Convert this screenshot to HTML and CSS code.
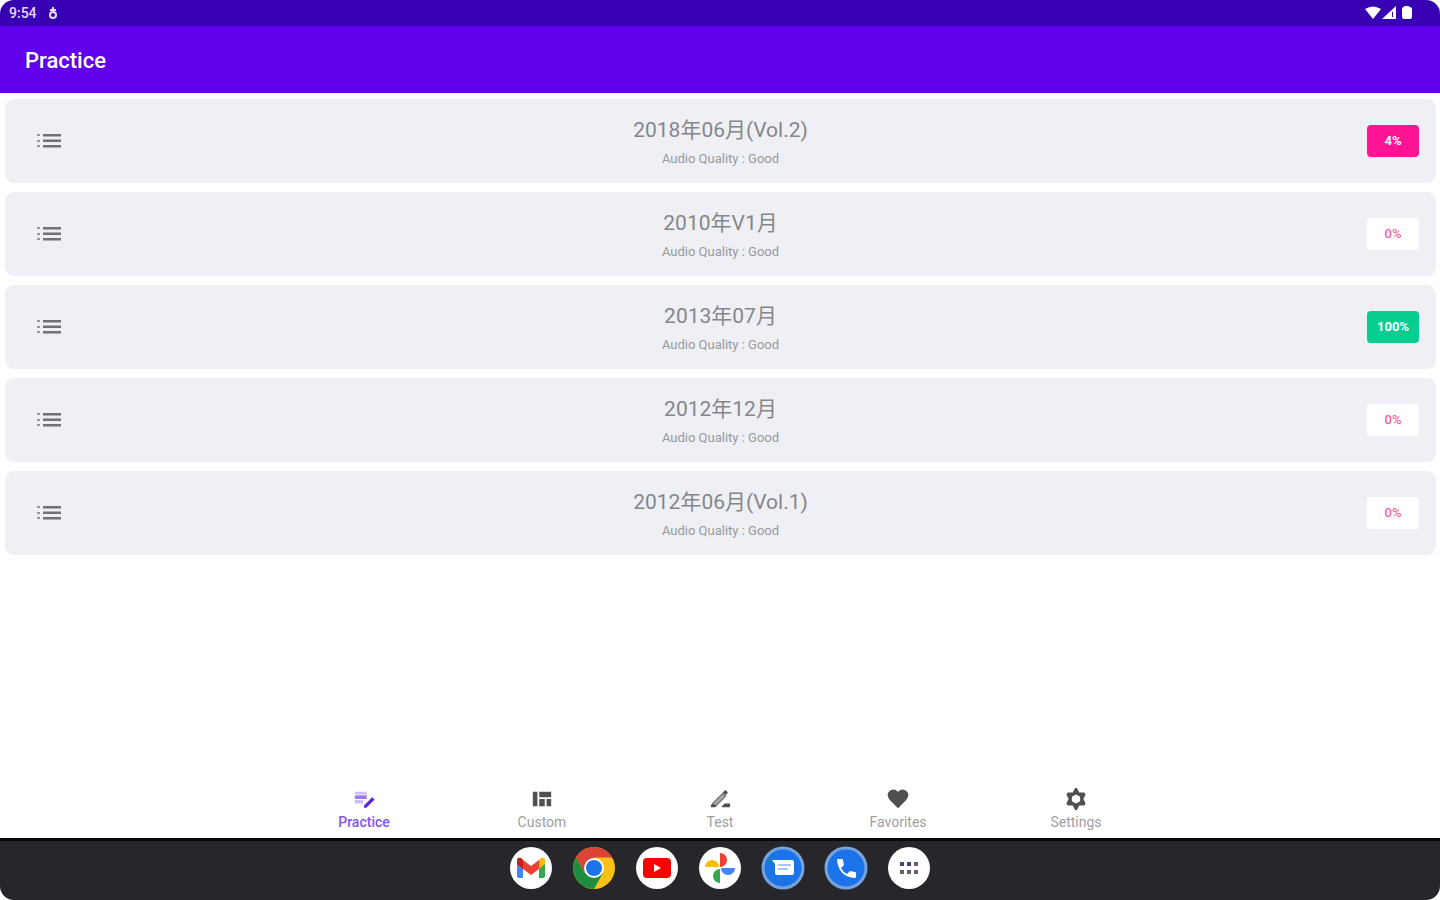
FILE: index.html
```
<!DOCTYPE html>
<html lang="en">
<head>
    <meta charset="UTF-8">
    <meta name="viewport" content="width=device-width, initial-scale=1.0">
    <title>Practice</title>
    <link rel="stylesheet" href="styles.css">
</head>
<body>
    <!-- shared list icon -->
    <svg class="defs" aria-hidden="true">
        <symbol id="icon-list" viewBox="0 0 24 16">
            <path d="M0 1h3v2H0zM0 7h3v2H0zM0 12h3v2H0z" opacity=".7"/>
            <path d="M6 1h18v2.500H6zM6 6.500h18V9H6zM6 12h18v2.500H6z"/>
        </symbol>
    </svg>

    <div class="screen">
        <div class="status-bar">
            <div class="status-left">
                <span>9:54</span>
                <svg width="10" height="14" viewBox="0 0 10 14" fill="none" stroke="#e6dcfa" stroke-width="2">
                    <path d="M5 1v5M2 4h6"/>
                    <circle cx="5" cy="9" r="3"/>
                </svg>
            </div>
            <svg width="48" height="16" viewBox="0 0 48 16" fill="#fff">
                <path d="M0 4Q8-1 16 4L8 14z"/>
                <path d="M31 1v13H17z"/>
                <path d="M27 7h1v5h-1z" fill="#3700b3"/>
                <path d="M39 1h5v1h1q2 0 2 2v8q0 2-2 2h-6q-2 0-2-2V4q0-2 2-2z"/>
            </svg>
        </div>

        <header class="app-bar">
            <h1>Practice</h1>
        </header>

        <main class="list">
            <div class="card">
                <button class="menu" aria-label="Show list"><svg><use href="#icon-list"/></svg></button>
                <div class="info">
                    <h2>2018年06月(Vol.2)</h2>
                    <p>Audio Quality : Good</p>
                </div>
                <span class="badge low">4%</span>
            </div>
            <div class="card">
                <button class="menu" aria-label="Show list"><svg><use href="#icon-list"/></svg></button>
                <div class="info">
                    <h2>2010年V1月</h2>
                    <p>Audio Quality : Good</p>
                </div>
                <span class="badge">0%</span>
            </div>
            <div class="card">
                <button class="menu" aria-label="Show list"><svg><use href="#icon-list"/></svg></button>
                <div class="info">
                    <h2>2013年07月</h2>
                    <p>Audio Quality : Good</p>
                </div>
                <span class="badge done">100%</span>
            </div>
            <div class="card">
                <button class="menu" aria-label="Show list"><svg><use href="#icon-list"/></svg></button>
                <div class="info">
                    <h2>2012年12月</h2>
                    <p>Audio Quality : Good</p>
                </div>
                <span class="badge">0%</span>
            </div>
            <div class="card">
                <button class="menu" aria-label="Show list"><svg><use href="#icon-list"/></svg></button>
                <div class="info">
                    <h2>2012年06月(Vol.1)</h2>
                    <p>Audio Quality : Good</p>
                </div>
                <span class="badge">0%</span>
            </div>
        </main>

        <nav class="tabs">
            <a href="#practice" class="active">
                <svg viewBox="0 0 24 24">
                    <path d="M2 4h13v3H2zM2 13h9v4H2z" opacity=".3"/>
                    <path d="M2 8h13v4H2z" opacity=".6"/>
                    <path d="M12 19l9-9 2.500 2.500-9 9H12z"/>
                </svg>
                Practice
            </a>
            <a href="#custom">
                <svg viewBox="0 0 24 24">
                    <path d="M2 4h5v16H2zM9 4h13v6H9zM9 12h6v8H9zM17 12h5v8h-5z"/>
                </svg>
                Custom
            </a>
            <a href="#test">
                <svg viewBox="0 0 24 24">
                    <path d="M4 17L15 6l3 3L7 20H4z" fill="#aaa" stroke="#777" stroke-width="1.500"/>
                    <path d="M15 5l2-2q1-1 2 0l1 1q1 1 0 2l-2 2zM14 20l3-3h6v4h-9zM2 18h5v3H2z"/>
                </svg>
                Test
            </a>
            <a href="#favorites">
                <svg viewBox="0 0 24 24">
                    <path d="M12 22L3 13Q-1 8 2 4 7-1 12 4 17-1 22 4 25 8 21 13z"/>
                </svg>
                Favorites
            </a>
            <a href="#settings">
                <svg viewBox="0 0 24 24">
                    <path fill-rule="evenodd" d="M11 0h2l2.500 5H21l1.500 2-2.500 5 2.500 5-1.500 2h-5.500L13 24h-2l-2.500-5H3l-1.500-2L4 12 1.500 7 3 5h5.500zM12 7l-4.500 2.500v5L12 17l4.500-2.500v-5z"/>
                </svg>
                Settings
            </a>
        </nav>

        <footer class="dock">
            <button aria-label="Gmail">
                <svg viewBox="0 0 44 44">
                    <circle cx="22" cy="22" r="21" fill="#fff"/>
                    <path d="M8 16l6 4v12h-4q-2 0-2-2z" fill="#4285f4"/>
                    <path d="M36 16l-6 4v12h4q2 0 2-2z" fill="#34a853"/>
                    <path d="M8 18v-3q0-4 4-3l2 2 8 6 8-6v9l-8 6-8-6z" fill="#ea4335"/>
                    <path d="M8 18v-3q0-4 4-3l2 2v9z" fill="#c5221f"/>
                    <path d="M30 14l2-2q4-1 4 3v3l-6 5z" fill="#fbbc04"/>
                </svg>
            </button>
            <button aria-label="Chrome">
                <svg viewBox="0 0 44 44">
                    <circle cx="22" cy="22" r="21" fill="#fbc116"/>
                    <path d="M3.800 11.500A21 21 0 0 1 40.200 11.500H22L13 27z" fill="#db4437"/>
                    <path d="M3.800 11.500A21 21 0 0 0 22 43l9-16H13z" fill="#1e8e3e"/>
                    <circle cx="22" cy="22" r="10" fill="#fff"/>
                    <circle cx="22" cy="22" r="8" fill="#1a73e8"/>
                </svg>
            </button>
            <button aria-label="YouTube">
                <svg viewBox="0 0 44 44">
                    <circle cx="22" cy="22" r="21" fill="#fff"/>
                    <rect x="8" y="12" width="28" height="20" rx="4" fill="#f00"/>
                    <path d="M19 18v8l7-4z" fill="#fff"/>
                </svg>
            </button>
            <button aria-label="Photos">
                <svg viewBox="0 0 44 44">
                    <circle cx="22" cy="22" r="21" fill="#fff"/>
                    <path d="M22 7a7 7 0 0 1 0 14z" fill="#ea4335"/>
                    <path d="M37 22a7 7 0 0 1-14 0z" fill="#4285f4"/>
                    <path d="M22 37a7 7 0 0 1 0-14z" fill="#34a853"/>
                    <path d="M7 21a7 7 0 0 1 14 0z" fill="#fbbc04"/>
                </svg>
            </button>
            <button aria-label="Messages">
                <svg viewBox="0 0 44 44">
                    <circle cx="22" cy="22" r="20" fill="#1a73e8" stroke="#77a3dc" stroke-width="3"/>
                    <path d="M11 14h20q2 0 2 2v11q0 2-2 2H16q-2 0-2-2v-9z" fill="#fff"/>
                    <path d="M17 18h13v2H17zM17 22h10v2H17z" fill="#a9c4f8"/>
                </svg>
            </button>
            <button aria-label="Phone">
                <svg viewBox="0 0 44 44">
                    <circle cx="22" cy="22" r="20" fill="#1a73e8" stroke="#77a3dc" stroke-width="3"/>
                    <path d="M14 13h4q1 0 1 1l1 5-3 3q2 4 6 6l3-3 5 1q1 0 1 1v4q0 1-1 1Q15 31 13 14q0-1 1-1z" fill="#fff"/>
                </svg>
            </button>
            <button aria-label="All apps">
                <svg viewBox="0 0 44 44">
                    <circle cx="22" cy="22" r="21" fill="#fff"/>
                    <path d="M13 16h4v4h-4zM20 16h4v4h-4z" fill="#3c4a80"/>
                    <path d="M27 16h4v4h-4z" fill="#80506a"/>
                    <path d="M13 24h4v4h-4zM20 24h4v4h-4zM27 24h4v4h-4z" fill="#606274"/>
                </svg>
            </button>
        </footer>
    </div>
</body>
</html>
```
FILE: styles.css
```
* {
    box-sizing: border-box;
}
body {
    font-family: Roboto, "Noto Sans CJK JP", sans-serif;
    margin: 0;
    background-color: #fff;
}
h1, h2, p {
    margin: 0;
}
button {
    background: none;
    border: none;
    padding: 0;
    cursor: pointer;
}
svg {
    display: block;
}
.defs {
    display: none;
}
.screen {
    display: flex;
    flex-direction: column;
    min-height: 100vh;
    border-radius: 14px;
    overflow: hidden;
}
.status-bar {
    display: flex;
    align-items: center;
    justify-content: space-between;
    height: 26px;
    padding: 0 27px 0 9px;
    background-color: #3700b3;
    color: #e6dcfa;
    font-size: 14px;
    font-weight: 500;
}
.status-left {
    display: flex;
    align-items: center;
    gap: 11px;
}
.app-bar {
    display: flex;
    align-items: center;
    height: 67px;
    padding: 1px 25px 0;
    background-color: #6200ee;
    color: #fff;
}
.app-bar h1 {
    font-size: 22px;
    font-weight: 500;
}
.list {
    flex: 1;
    display: flex;
    flex-direction: column;
    gap: 9px;
    padding: 6px 4px 6px 5px;
}
.card {
    display: grid;
    grid-template-columns: 52px 1fr 52px;
    align-items: center;
    padding: 16px 17px;
    border-radius: 9px;
    background-color: #eff0f5;
}
.menu {
    padding-left: 15px;
}
.menu svg {
    width: 24px;
    height: 16px;
    fill: #707175;
}
.info {
    text-align: center;
    color: #85868a;
}
.info h2 {
    font-size: 21px;
    font-weight: 400;
    line-height: 30px;
}
.info p {
    font-size: 13px;
    line-height: 16px;
    padding-top: 6px;
    color: #98999d;
}
.badge {
    height: 32px;
    border-radius: 4px;
    background-color: #fff;
    color: #ff6298;
    font-size: 13px;
    font-weight: 500;
    line-height: 32px;
    text-align: center;
}
.badge.low {
    background-color: #ff1493;
    color: #fff;
    font-weight: 700;
}
.badge.done {
    background-color: #06ce91;
    color: #fff;
    font-weight: 700;
}
.tabs {
    display: flex;
    justify-content: center;
    padding: 12px 0 8px;
}
.tabs a {
    display: flex;
    flex-direction: column;
    align-items: center;
    gap: 4px;
    width: 178px;
    color: #a0a0a0;
    font-size: 14px;
    line-height: 16px;
    text-decoration: none;
}
.tabs svg {
    width: 22px;
    height: 22px;
    fill: #505050;
}
.tabs .active {
    color: #8254f0;
    font-weight: 500;
}
.tabs .active svg {
    fill: #5a20e0;
}
.dock {
    display: flex;
    justify-content: center;
    gap: 19px;
    padding: 5px 0 10px;
    border-top: 3px solid #08080a;
    background-color: #27262b;
}
.dock svg {
    width: 44px;
    height: 44px;
}
```
